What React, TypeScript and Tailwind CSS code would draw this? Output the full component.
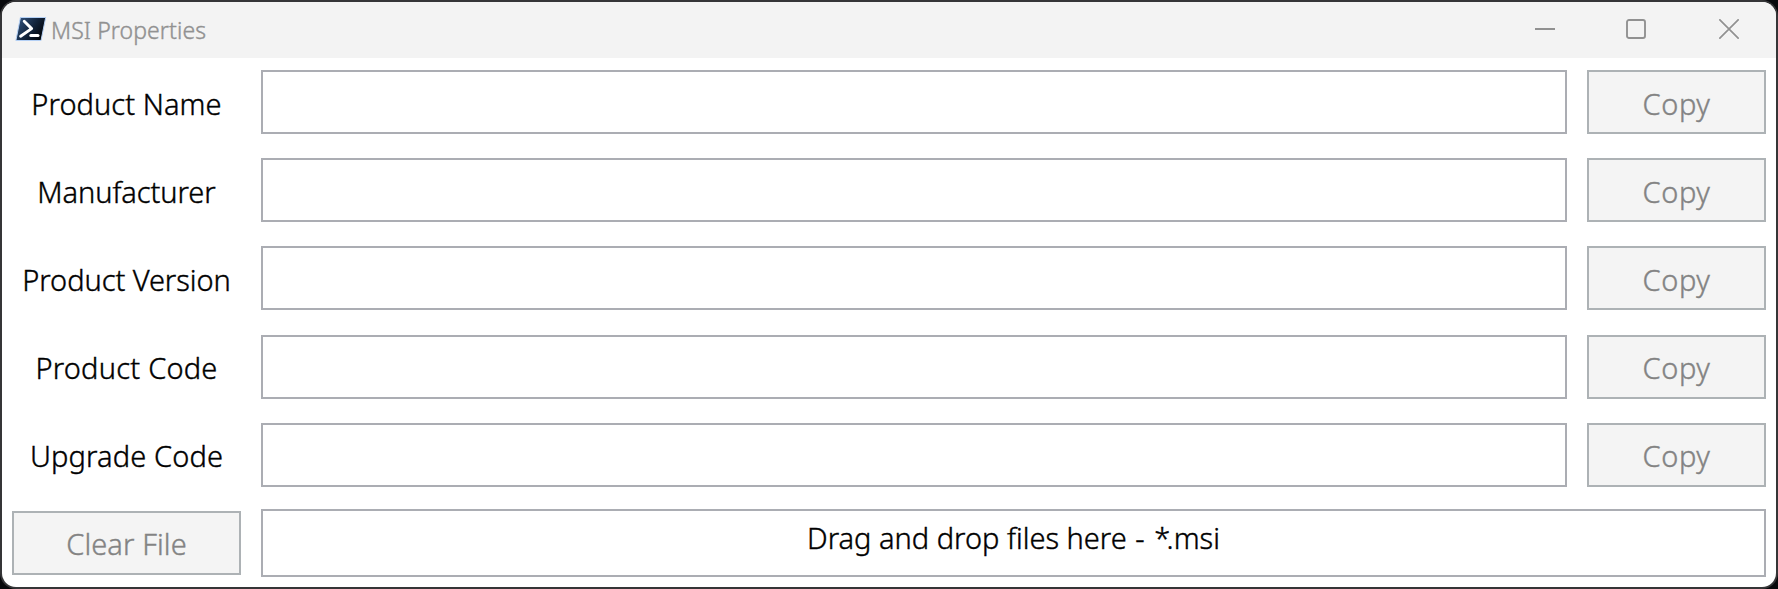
const fields = [
  { label: 'Product Name', tracking: 'tracking-[0.07px]', gap: 'mb-6', labelPad: 'pt-[14px]', copyPad: 'pt-[4px]' },
  { label: 'Manufacturer', tracking: 'tracking-[-0.07px]', gap: 'mb-6', labelPad: 'pt-[14px]', copyPad: 'pt-[4px]' },
  { label: 'Product Version', tracking: 'tracking-[-0.07px]', gap: 'mb-[25px]', labelPad: 'pt-[14px]', copyPad: 'pt-[4px]' },
  { label: 'Product Code', tracking: 'tracking-[0.23px]', gap: 'mb-6', labelPad: 'pt-[13px]', copyPad: 'pt-[2px]' },
  { label: 'Upgrade Code', tracking: 'tracking-[0.13px]', gap: 'mb-[22px]', labelPad: 'pt-[13px]', copyPad: 'pt-[2px]' },
];

function PowerShellIcon() {
  return (
    <svg width="32" height="26" viewBox="0 0 32 26" fill="none">
      <defs>
        <linearGradient id="ps" x1="4" y1="4" x2="27" y2="20" gradientUnits="userSpaceOnUse">
          <stop stopColor="#2f4f78" />
          <stop offset="0.55" stopColor="#12233a" />
          <stop offset="1" stopColor="#03060b" />
        </linearGradient>
      </defs>
      <path d="M5.4 1.5H30.7L26 24.5H0.9Z" fill="url(#ps)" stroke="#b4d0f5" strokeWidth="1" />
      <path d="M9.2 5.2L16.6 12.6L5.6 20.2" stroke="#fff" strokeWidth="2.9" strokeLinecap="round" strokeLinejoin="round" />
      <path d="M15.8 19.4H23" stroke="#fff" strokeWidth="3" strokeLinecap="round" />
    </svg>
  );
}

function TitleBar() {
  return (
    <header className="flex h-14 items-start bg-[#f3f3f3] pl-[13px] text-[#919191]">
      <div className="pt-[14px]">
        <PowerShellIcon />
      </div>
      <h1 className="ml-[4px] mt-[12px] text-[23px] leading-8 tracking-[0.1px] text-[#919191]">MSI Properties</h1>
      <div className="ml-auto mr-[37px] flex gap-[71px] pt-[17px]">
        <button aria-label="Minimize">
          <svg width="20" height="20" viewBox="0 0 20 20" fill="none" stroke="currentColor" strokeWidth="2">
            <path d="M0 10H20" />
          </svg>
        </button>
        <button aria-label="Maximize">
          <svg width="20" height="20" viewBox="0 0 20 20" fill="none" stroke="currentColor" strokeWidth="1.9">
            <rect x="1" y="1" width="18" height="18" rx="2" />
          </svg>
        </button>
        <button aria-label="Close" className="ml-[2px]">
          <svg width="20" height="20" viewBox="0 0 20 20" fill="none" stroke="currentColor" strokeWidth="1.7">
            <path d="M0.3 0.3L19.7 19.7M19.7 0.3L0.3 19.7" />
          </svg>
        </button>
      </div>
    </header>
  );
}

export default function App() {
  return (
    <div className="h-[589px] w-[1778px] bg-[#08090c] font-['Noto_Sans',sans-serif] font-light [-webkit-text-stroke-width:0.4px]">
      <div className="h-full overflow-hidden rounded-[16px] bg-[#353537] p-[2px]">
        <div className="h-full overflow-hidden rounded-[14px] bg-white">
          <TitleBar />
          <main className="px-[10px] pt-3 text-[29px] leading-[40px]">
            {fields.map((f) => (
              <div key={f.label} className={`flex h-16 ${f.gap}`}>
                <label className={`w-[229px] text-center whitespace-nowrap text-black ${f.labelPad} ${f.tracking}`}>{f.label}</label>
                <div className="ml-5 w-[1306px] border-2 border-[#abadb3] bg-white" />
                <button className={`ml-5 w-[179px] border-2 border-[#adb2b5] bg-[#f4f4f4] tracking-[0.6px] text-[#838383] ${f.copyPad}`}>
                  Copy
                </button>
              </div>
            ))}
            <div className="flex items-center">
              <button className="h-16 w-[229px] border-2 border-[#adb2b5] bg-[#f4f4f4] pt-[2px] tracking-[0.1px] text-[#838383]">
                Clear File
              </button>
              <div className="ml-5 h-[68px] w-[1505px] border-2 border-[#abadb3] bg-white pt-[7px] text-center text-black">
                Drag and drop files here <span className="ml-[1px] mr-[2px]">-</span> <span className="tracking-[-3.5px]">*</span>.msi
              </div>
            </div>
          </main>
        </div>
      </div>
    </div>
  );
}
